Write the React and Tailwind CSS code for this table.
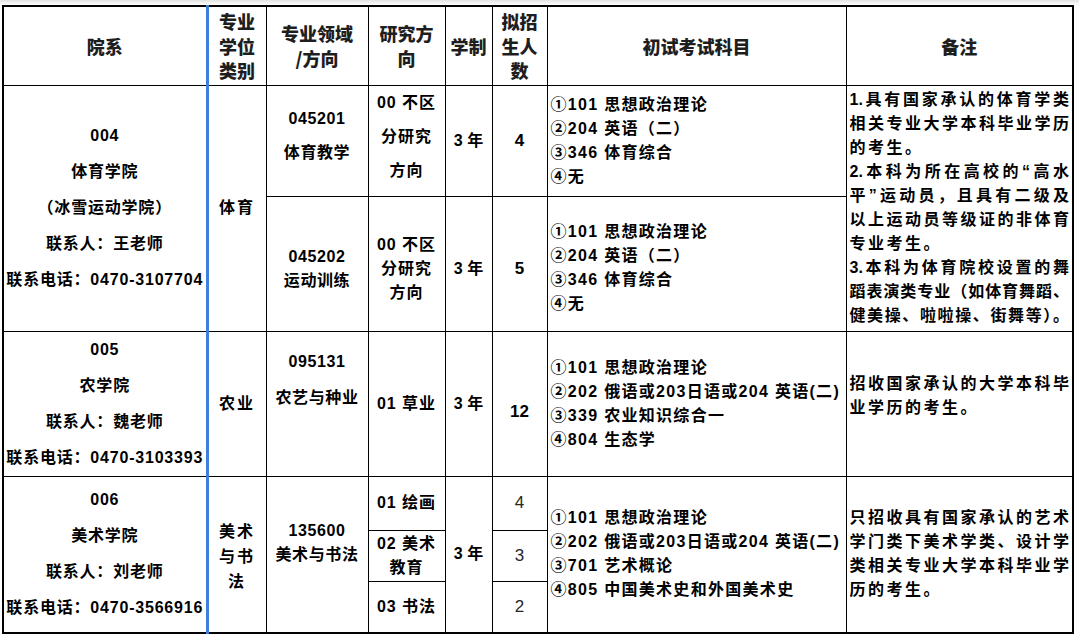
import React from "react";

// shared cell styles
const td = "border border-black p-0 text-center align-middle";
const blue = "border-r-[3px] border-r-[#3d7fdc]";
const th = "border border-black p-0 text-center align-middle font-['Noto_Sans_CJK_SC',sans-serif] font-black text-[18px] leading-[24.5px] text-[#1e1e1e]";

const Lines = ({ items, className = "" }) => (
    <div className={className}>
        {items.map((t, i) => (
            <div key={i} className="whitespace-nowrap">{t}</div>
        ))}
    </div>
);

// remarks: every full line is spread over the cell width, like the sheet does
const Remark = ({ lines }) => (
    <div className="px-[3px] text-[16px] leading-[24px]">
        {lines.map(([text, full], i) => (
            <div
                key={i}
                className={full ? "whitespace-nowrap text-justify [text-align-last:justify]" : "whitespace-nowrap text-left tracking-[2.5px]"}
            >
                {text}
            </div>
        ))}
    </div>
);

const Exam = ({ items, className = "" }) => (
    <div className={`pl-[3px] text-left text-[16px] leading-[24px] tracking-[1.3px] ${className}`}>
        {items.map((t, i) => (
            <div key={i} className="whitespace-nowrap">{t}</div>
        ))}
    </div>
);

const exam1 = ["①101 思想政治理论", "②204 英语（二）", "③346 体育综合", "④无"];

const remark1 = [
    ["1.具有国家承认的体育学类", true],
    ["相关专业大学本科毕业学历", true],
    ["的考生。", false],
    ["2.本科为所在高校的“高水", true],
    ["平”运动员，且具有二级及", true],
    ["以上运动员等级证的非体育", true],
    ["专业考生。", false],
    ["3.本科为体育院校设置的舞", true],
    ["蹈表演类专业（如体育舞蹈、", true],
    ["健美操、啦啦操、街舞等）。", true],
];

const remark2 = [
    ["招收国家承认的大学本科毕", true],
    ["业学历的考生。", false],
];

const remark3 = [
    ["只招收具有国家承认的艺术", true],
    ["学门类下美术学类、设计学", true],
    ["类相关专业大学本科毕业学", true],
    ["历的考生。", false],
];

export default function App() {
    return (
        <div className="w-[1079px] h-[639px] overflow-hidden bg-white text-black font-['Liberation_Sans','Noto_Sans_CJK_SC',sans-serif] font-bold">
            {/* faint grey edge at the very top */}
            <div className="h-[5px] bg-linear-to-b from-[#e2e2e2] to-white" />
            <div className="pl-[2px]">
                <table className="table-fixed border-collapse border-2 border-black w-[1070px]">
                    <colgroup>
                        <col className="w-[204px]" />
                        <col className="w-[59px]" />
                        <col className="w-[102px]" />
                        <col className="w-[77px]" />
                        <col className="w-[47px]" />
                        <col className="w-[55px]" />
                        <col className="w-[299px]" />
                        <col className="w-[227px]" />
                    </colgroup>
                    <tbody>
                        {/* header */}
                        <tr className="h-[79px]">
                            <th className={`${th} ${blue}`}>院系</th>
                            <th className={th}><Lines items={["专业", "学位", "类别"]} /></th>
                            <th className={th}><Lines items={["专业领域", "/方向"]} /></th>
                            <th className={th}><Lines items={["研究方", "向"]} /></th>
                            <th className={th}>学制</th>
                            <th className={th}><Lines items={["拟招", "生人", "数"]} /></th>
                            <th className={th}>初试考试科目</th>
                            <th className={th}>备注</th>
                        </tr>

                        {/* 004 体育学院 */}
                        <tr className="h-[110px]">
                            <td rowSpan={2} className={`${td} ${blue}`}>
                                <Lines
                                    className="text-[16px] leading-[36px] tracking-[0.8px]"
                                    items={["004", "体育学院", "（冰雪运动学院）", "联系人：王老师", "联系电话：0470-3107704"]}
                                />
                            </td>
                            <td rowSpan={2} className={`${td} text-[16px] tracking-[2px]`}>体育</td>
                            <td className={`${td} pb-[10px]`}>
                                <Lines className="text-[16px] leading-[34px] tracking-[0.6px]" items={["045201", "体育教学"]} />
                            </td>
                            <td className={`${td} pb-[8px]`}>
                                <Lines className="text-[16px] leading-[34px] tracking-[1px]" items={["00 不区", "分研究", "方向"]} />
                            </td>
                            <td className={`${td} text-[16px]`}>3 年</td>
                            <td className={`${td} text-[17px]`}>4</td>
                            <td className={td}><Exam items={exam1} /></td>
                            <td rowSpan={2} className={td}><Remark lines={remark1} /></td>
                        </tr>
                        <tr className="h-[135px]">
                            <td className={`${td} pt-[10px]`}>
                                <Lines className="text-[16px] leading-[24px] tracking-[0.6px]" items={["045202", "运动训练"]} />
                            </td>
                            <td className={`${td} pt-[10px]`}>
                                <Lines className="text-[16px] leading-[24px] tracking-[1px]" items={["00 不区", "分研究", "方向"]} />
                            </td>
                            <td className={`${td} pt-[10px] text-[16px]`}>3 年</td>
                            <td className={`${td} pt-[10px] text-[17px]`}>5</td>
                            <td className={`${td} pt-[8px]`}><Exam items={exam1} /></td>
                        </tr>

                        {/* 005 农学院 */}
                        <tr className="h-[144px]">
                            <td className={`${td} ${blue}`}>
                                <Lines
                                    className="text-[16px] leading-[36px] tracking-[0.8px]"
                                    items={["005", "农学院", "联系人：魏老师", "联系电话：0470-3103393"]}
                                />
                            </td>
                            <td className={`${td} text-[16px] tracking-[2px]`}>农业</td>
                            <td className={`${td} !align-top pt-[12px]`}>
                                <Lines className="text-[16px] leading-[36px] tracking-[0.6px]" items={["095131", "农艺与种业"]} />
                            </td>
                            <td className={`${td} text-[16px] tracking-[1px]`}>01 草业</td>
                            <td className={`${td} text-[16px]`}>3 年</td>
                            <td className={`${td} pt-[16px] text-[17px]`}>12</td>
                            <td className={td}>
                                <Exam items={["①101 思想政治理论", "②202 俄语或203日语或204 英语(二)", "③339 农业知识综合一", "④804 生态学"]} />
                            </td>
                            <td className={`${td} pb-[16px]`}><Remark lines={remark2} /></td>
                        </tr>

                        {/* 006 美术学院 */}
                        <tr className="h-[54px]">
                            <td rowSpan={3} className={`${td} ${blue}`}>
                                <Lines
                                    className="text-[16px] leading-[36px] tracking-[0.8px]"
                                    items={["006", "美术学院", "联系人：刘老师", "联系电话：0470-3566916"]}
                                />
                            </td>
                            <td rowSpan={3} className={`${td} pt-[4px]`}>
                                <Lines className="text-[16px] leading-[25px] tracking-[2px]" items={["美术", "与书", "法"]} />
                            </td>
                            <td rowSpan={3} className={`${td} pb-[22px]`}>
                                <Lines className="text-[16px] leading-[24px] tracking-[0.6px]" items={["135600", "美术与书法"]} />
                            </td>
                            <td className={`${td} text-[16px] tracking-[1px]`}>01 绘画</td>
                            <td rowSpan={3} className={`${td} text-[16px]`}>3 年</td>
                            <td className={`${td} text-[17px] font-medium text-[#262626]`}>4</td>
                            <td rowSpan={3} className={td}>
                                <Exam items={["①101 思想政治理论", "②202 俄语或203日语或204 英语(二)", "③701 艺术概论", "④805 中国美术史和外国美术史"]} />
                            </td>
                            <td rowSpan={3} className={td}><Remark lines={remark3} /></td>
                        </tr>
                        <tr className="h-[51px]">
                            <td className={td}>
                                <Lines className="text-[16px] leading-[24px] tracking-[1px]" items={["02 美术", "教育"]} />
                            </td>
                            <td className={`${td} text-[17px] font-medium text-[#262626]`}>3</td>
                        </tr>
                        <tr className="h-[52px]">
                            <td className={`${td} text-[16px] tracking-[1px]`}>03 书法</td>
                            <td className={`${td} text-[17px] font-medium text-[#262626]`}>2</td>
                        </tr>
                    </tbody>
                </table>
            </div>
        </div>
    );
}
